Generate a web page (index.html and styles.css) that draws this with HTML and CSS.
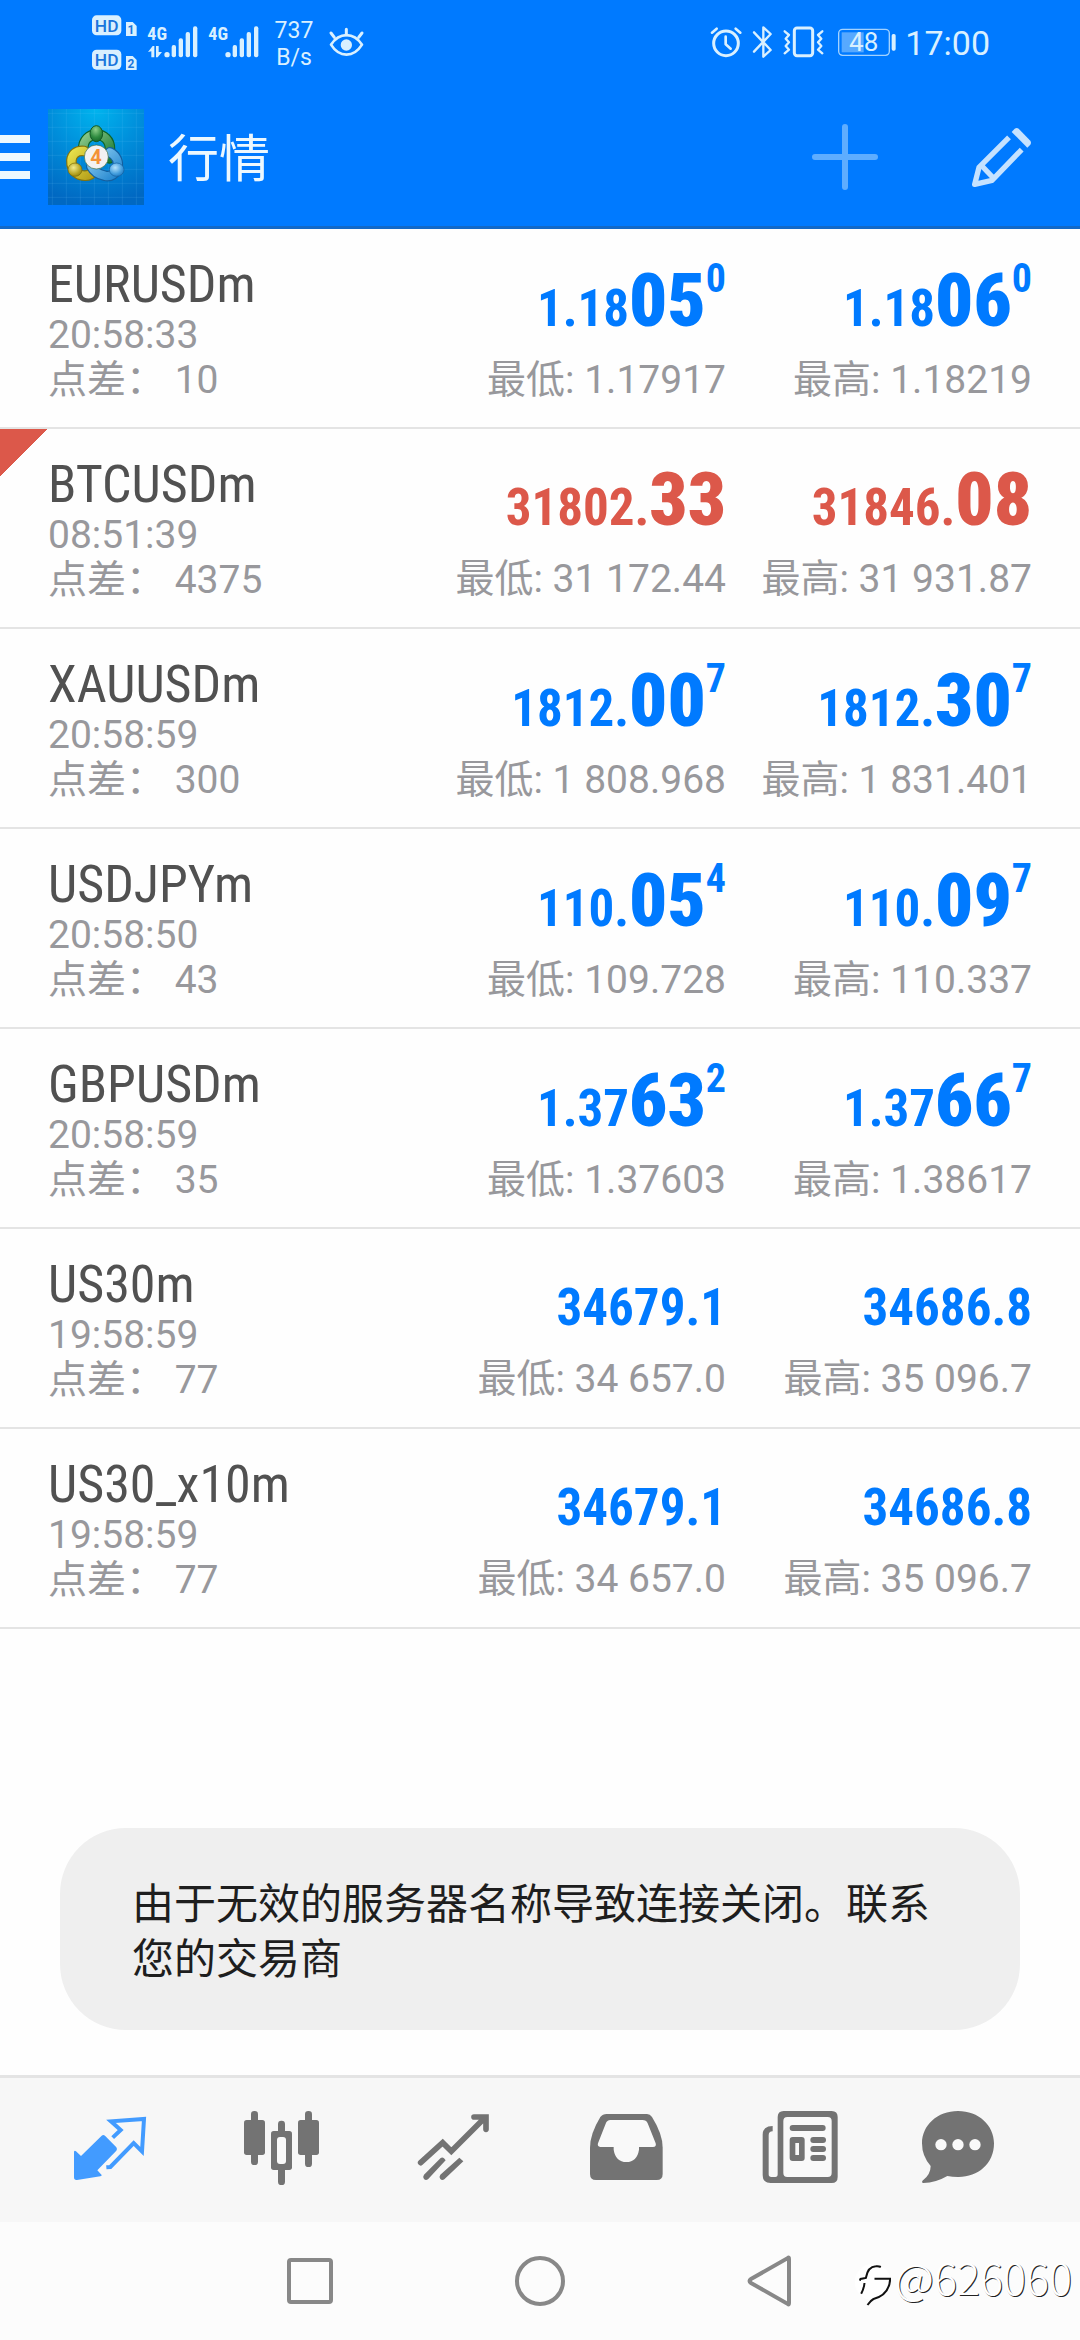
FILE: index.html
```html
<!DOCTYPE html>
<html lang="zh-CN">
<head>
<meta charset="utf-8">
<meta name="viewport" content="width=device-width, initial-scale=1">
<title>行情</title>
<link rel="stylesheet" href="styles.css">
</head>
<body>
<div class="status-bar">
  <svg class="status-signal" viewBox="60 0 540 252" aria-hidden="true">
    <g class="tint">
      <rect x="66" y="46" width="88" height="60" rx="14"/>
      <path d="M168 66h20l12 12v30h-32z"/>
      <rect x="66" y="149" width="88" height="60" rx="14"/>
      <path d="M168 168h20l12 12v30h-32z"/>
      <circle cx="291" cy="164" r="8"/>
      <rect x="305" y="135" width="13" height="37" rx="6"/>
      <rect x="326" y="115" width="13" height="57" rx="6"/>
      <rect x="347" y="96" width="13" height="76" rx="6"/>
      <rect x="369" y="79" width="13" height="93" rx="6"/>
      <path d="M234 156l14-18h5v34h-9v-18zM258 138h8v18h10l-13 16h-5z"/>
      <circle cx="474" cy="164" r="8"/>
      <rect x="488" y="135" width="13" height="37" rx="6"/>
      <rect x="509" y="115" width="13" height="57" rx="6"/>
      <rect x="530" y="96" width="13" height="76" rx="6"/>
      <rect x="552" y="79" width="13" height="93" rx="6"/>
      <text class="net" x="232" y="120">4G</text>
      <text class="net" x="415" y="120">4G</text>
    </g>
    <g class="knockout">
      <text class="hd" x="110" y="95">HD</text>
      <text class="hd" x="110" y="198">HD</text>
      <text class="sim" x="183" y="103">1</text>
      <text class="sim" x="183" y="204">2</text>
    </g>
  </svg>
  <div class="speed"><span>737</span><span>B/s</span></div>
  <svg class="status-eye" viewBox="762 0 132 252" aria-hidden="true">
    <g class="line">
      <path d="M783 134c25-38 68-38 93 0c-25 40-68 40-93 0z" stroke-width="8"/>
      <path d="M829 104V88M793 112l-10-13M866 112l10-13" stroke-width="9"/>
    </g>
    <circle class="tint" cx="829" cy="135" r="17"/>
  </svg>
  <svg class="status-right" viewBox="48 0 582 252" aria-hidden="true">
    <g class="line">
      <circle cx="105" cy="130" r="37" stroke-width="9"/>
      <path d="M104 110v23l15 13M63 98l14-12M148 98l-14-12" stroke-width="8"/>
      <path d="M189 97l50 53-22 20V82l22 20-50 53" stroke-width="7"/>
      <rect x="310" y="84" width="55" height="83" rx="8" stroke-width="9"/>
      <path d="M281 94l13 11-10 11 10 11-10 11 10 11-13 11M394 94l-13 11 10 11-10 11 10 11-10 11 13 11" stroke-width="7"/>
      <rect x="443" y="88" width="152" height="78" rx="12" stroke-width="4" opacity=".75"/>
    </g>
    <g class="tint">
      <rect x="452" y="97" width="66" height="60" opacity=".4"/>
      <rect x="602" y="102" width="12" height="50" rx="5"/>
      <text class="battery" x="518" y="153">48</text>
    </g>
  </svg>
  <time class="clock">17:00</time>
</div>

<header class="app-bar">
  <button class="menu" type="button" aria-label="菜单"><span></span><span></span><span></span></button>
  <svg class="logo" viewBox="0 0 288 288" aria-hidden="true">
    <defs>
      <radialGradient id="sky" cx=".5" cy="0" r="1">
        <stop offset="0" stop-color="#00b4ee"/><stop offset=".45" stop-color="#0090dc"/><stop offset="1" stop-color="#0068c2"/>
      </radialGradient>
      <linearGradient id="green" x1="0" y1="0" x2="1" y2="1"><stop offset="0" stop-color="#8cc98a"/><stop offset="1" stop-color="#1d7c35"/></linearGradient>
      <linearGradient id="yellow" x1="0" y1="0" x2="1" y2="1"><stop offset="0" stop-color="#e8e04a"/><stop offset="1" stop-color="#b49d18"/></linearGradient>
      <linearGradient id="blue" x1="0" y1="0" x2="1" y2="1"><stop offset="0" stop-color="#8accf2"/><stop offset="1" stop-color="#2386cf"/></linearGradient>
      <radialGradient id="greenball" cx=".45" cy=".25" r=".8"><stop offset="0" stop-color="#8fd08a"/><stop offset=".6" stop-color="#2f8b40"/><stop offset="1" stop-color="#156428"/></radialGradient>
      <radialGradient id="yellowball" cx=".4" cy=".35" r=".8"><stop offset="0" stop-color="#f2eb8a"/><stop offset=".6" stop-color="#b5a424"/><stop offset="1" stop-color="#857508"/></radialGradient>
      <radialGradient id="blueball" cx=".4" cy=".35" r=".8"><stop offset="0" stop-color="#b5e2fb"/><stop offset=".6" stop-color="#3f9bdc"/><stop offset="1" stop-color="#1a6bb5"/></radialGradient>
    </defs>
    <rect width="288" height="288" fill="url(#sky)"/>
    <path d="M13 0v288M55 0v288M97 0v288M139 0v288M181 0v288M223 0v288M265 0v288M0 13h288M0 55h288M0 97h288M0 139h288M0 181h288M0 223h288M0 265h288" stroke="#7fd4ff" stroke-opacity=".2" stroke-width="2"/>
    <g fill="none" stroke-linecap="round">
      <path d="M106 122c-4-60 82-60 80 0l-2 26" stroke="#0e6428" stroke-width="32"/>
      <path d="M106 122c-4-60 82-60 80 0l-2 26" stroke="url(#green)" stroke-width="25"/>
      <path d="M108 126c-48-5-48 56-14 71c20 7 36 2 48-14" stroke="#84730c" stroke-width="32"/>
      <path d="M108 126c-48-5-48 56-14 71c20 7 36 2 48-14" stroke="url(#yellow)" stroke-width="25"/>
      <path d="M186 130c42 22 22 80-16 70c-20-4-34-16-40-28" stroke="#145f9f" stroke-width="32"/>
      <path d="M186 130c42 22 22 80-16 70c-20-4-34-16-40-28" stroke="url(#blue)" stroke-width="25"/>
    </g>
    <ellipse cx="145" cy="74" rx="19" ry="24" fill="url(#greenball)" stroke="#125a24" stroke-width="3"/>
    <ellipse cx="81" cy="182" rx="21" ry="20" fill="url(#yellowball)" stroke="#786a08" stroke-width="2"/>
    <ellipse cx="206" cy="182" rx="22" ry="20" fill="url(#blueball)" stroke="#145f9f" stroke-width="2"/>
    <circle cx="145" cy="144" r="36" fill="#f3f2f2" stroke="#36683c" stroke-width="2"/>
    <text class="logo-digit" x="144" y="165">4</text>
  </svg>
  <h1 class="title">行情</h1>
  <div class="actions">
    <button class="icon-button" type="button" aria-label="添加">
      <svg width="68" height="68" viewBox="96 69 204 204"><path d="M198 81v180M108 171h180" stroke="#5eadff" stroke-width="18" stroke-linecap="round"/></svg>
    </button>
    <button class="icon-button" type="button" aria-label="编辑">
      <svg width="61" height="61" viewBox="576 78 183 183">
        <g fill="none" stroke="#c5e2ff" stroke-linejoin="round">
          <path d="M690 109L600 199l-13 51 52-12 89-92" stroke-width="16"/>
          <path d="M606 192l40 42" stroke-width="16"/>
        </g>
        <path d="M698 93l9-10q6-4 12 0l35 36q4 6 0 12l-9 9z" fill="#c5e2ff"/>
      </svg>
    </button>
  </div>
</header>

<main class="content">
  <table class="quotes">
    <tbody>
      <tr>
        <td class="symbol"><span class="name">EURUSDm</span><span class="meta">20:58:33</span><span class="meta">点差： 10</span></td>
        <td class="quote"><span class="price">1.18<b>05</b><sup>0</sup></span><span class="meta">最低: 1.17917</span></td>
        <td class="quote"><span class="price">1.18<b>06</b><sup>0</sup></span><span class="meta">最高: 1.18219</span></td>
      </tr>
      <tr class="down">
        <td class="symbol"><span class="name">BTCUSDm</span><span class="meta">08:51:39</span><span class="meta">点差： 4375</span></td>
        <td class="quote"><span class="price">31802.<b>33</b></span><span class="meta">最低: 31 172.44</span></td>
        <td class="quote"><span class="price">31846.<b>08</b></span><span class="meta">最高: 31 931.87</span></td>
      </tr>
      <tr>
        <td class="symbol"><span class="name">XAUUSDm</span><span class="meta">20:58:59</span><span class="meta">点差： 300</span></td>
        <td class="quote"><span class="price">1812.<b>00</b><sup>7</sup></span><span class="meta">最低: 1 808.968</span></td>
        <td class="quote"><span class="price">1812.<b>30</b><sup>7</sup></span><span class="meta">最高: 1 831.401</span></td>
      </tr>
      <tr>
        <td class="symbol"><span class="name">USDJPYm</span><span class="meta">20:58:50</span><span class="meta">点差： 43</span></td>
        <td class="quote"><span class="price">110.<b>05</b><sup>4</sup></span><span class="meta">最低: 109.728</span></td>
        <td class="quote"><span class="price">110.<b>09</b><sup>7</sup></span><span class="meta">最高: 110.337</span></td>
      </tr>
      <tr>
        <td class="symbol"><span class="name">GBPUSDm</span><span class="meta">20:58:59</span><span class="meta">点差： 35</span></td>
        <td class="quote"><span class="price">1.37<b>63</b><sup>2</sup></span><span class="meta">最低: 1.37603</span></td>
        <td class="quote"><span class="price">1.37<b>66</b><sup>7</sup></span><span class="meta">最高: 1.38617</span></td>
      </tr>
      <tr>
        <td class="symbol"><span class="name">US30m</span><span class="meta">19:58:59</span><span class="meta">点差： 77</span></td>
        <td class="quote"><span class="price">34679.1</span><span class="meta">最低: 34 657.0</span></td>
        <td class="quote"><span class="price">34686.8</span><span class="meta">最高: 35 096.7</span></td>
      </tr>
      <tr>
        <td class="symbol"><span class="name">US30_x10m</span><span class="meta">19:58:59</span><span class="meta">点差： 77</span></td>
        <td class="quote"><span class="price">34679.1</span><span class="meta">最低: 34 657.0</span></td>
        <td class="quote"><span class="price">34686.8</span><span class="meta">最高: 35 096.7</span></td>
      </tr>
    </tbody>
  </table>
  <p class="toast" role="status">由于无效的服务器名称导致连接关闭。联系您的交易商</p>
</main>

<nav class="tabs">
  <button class="tab active" type="button" aria-label="行情">
    <svg viewBox="66 96 288 288">
      <path class="solid" d="M185 197q5-4 10 0l34 35q4 5 0 10l-57 59 13 14q1 3-4 4l-70 11q-9 1-9-8v-77q2-5 6-1l15 14z"/>
      <path class="stroke" d="M218 203l24-23-29-26 99-7-6 97-25-25-70 72-12 1" stroke-width="12"/>
    </svg>
  </button>
  <button class="tab" type="button" aria-label="图表">
    <svg viewBox="582 96 288 288">
      <g class="solid">
        <rect x="633" y="123" width="21" height="162" rx="10"/><rect x="612" y="150" width="63" height="105" rx="8"/>
        <rect x="795" y="123" width="21" height="168" rx="10"/><rect x="774" y="150" width="63" height="105" rx="8"/>
        <rect x="714" y="152" width="21" height="40" rx="10"/><rect x="714" y="290" width="21" height="55" rx="10"/>
        <rect x="693" y="183" width="63" height="117" rx="8"/>
      </g>
      <rect class="paper" x="711" y="201" width="27" height="81" rx="9"/>
    </svg>
  </button>
  <button class="tab" type="button" aria-label="交易">
    <svg viewBox="1098 96 288 288">
      <path class="stroke" d="M1142 278l66-60 26 26 102-102M1302 141h36v37" stroke-width="17" stroke-linecap="round"/>
      <path class="solid" d="M1202 264q5-4 10 1l5 6-53 57q-7 4-12-1-5-6 0-13zM1258 263l12 11-57 54q-7 4-12-1-5-6 0-13z"/>
    </svg>
  </button>
  <button class="tab" type="button" aria-label="历史">
    <svg viewBox="54 96 288 288">
      <path class="solid" d="M140 132h121q9 0 15 9 32 51 32 92v79q0 18-18 18H108q-18 0-18-18v-79q0-41 31-92 7-9 19-9z"/>
      <path class="paper" d="M151 150h96q12 0 16 10l24 60q3 11-8 11h-42v8q-6 37-38 37t-38-37v-8h-40q-10-1-7-11l23-59q4-11 14-11z"/>
    </svg>
  </button>
  <button class="tab" type="button" aria-label="新闻">
    <svg viewBox="570 96 288 288">
      <path class="solid" d="M638 168v16q-12 0-12 12v117q0 8 8 8h12q7 0 7-8V141q0-18 18-18h144q18 0 18 18v180q0 18-18 18H632q-24 0-24-24V194q0-26 30-26z"/>
      <rect class="paper" x="670" y="141" width="145" height="180" rx="12"/>
      <g class="solid">
        <rect x="689" y="165" width="108" height="18" rx="9"/><rect x="689" y="201" width="45" height="72" rx="9"/>
        <rect x="751" y="201" width="47" height="18" rx="9"/><rect x="751" y="228" width="47" height="18" rx="9"/><rect x="751" y="255" width="47" height="18" rx="9"/>
      </g>
      <rect class="paper" x="706" y="219" width="11" height="36"/>
    </svg>
  </button>
  <button class="tab" type="button" aria-label="消息">
    <svg viewBox="1086 96 288 288">
      <path class="solid" d="M1194 123c62 0 108 43 108 97 0 63-50 102-108 101q-17 0-32-3-34 20-72 21-7-2-1-8 23-18 23-43-26-29-26-68c0-54 46-97 108-97z"/>
      <g class="paper"><circle cx="1143" cy="224" r="17"/><circle cx="1194" cy="224" r="17"/><circle cx="1245" cy="224" r="17"/></g>
    </svg>
  </button>
</nav>

<footer class="system-nav">
  <button class="system-key" type="button" aria-label="最近任务"><svg viewBox="0 0 54 54"><rect x="6" y="6" width="42" height="42" rx="2"/></svg></button>
  <button class="system-key" type="button" aria-label="主屏幕"><svg viewBox="0 0 54 54"><circle cx="27" cy="27" r="23"/></svg></button>
  <button class="system-key" type="button" aria-label="返回"><svg viewBox="0 0 54 54"><path d="M45 4q1-1 1 1v44q0 2-1 1L8 29q-3-2 0-4z"/></svg></button>
  <div class="watermark">
    <svg viewBox="104 128 110 132" aria-hidden="true">
      <circle cx="160" cy="185" r="54" fill="#fff"/>
      <path d="M121 181l2-5 16-3q6-34 30-35 9-1 15 2M165 175h47q-2 48-50 61-8 4-18 18M135 188q-2 18-10 32" fill="none" stroke="#111" stroke-width="6"/>
    </svg>
    <span>@626060</span>
  </div>
</footer>
</body>
</html>
```
FILE: styles.css
```css
* {
  box-sizing: border-box;
}

body {
  margin: 0;
  min-height: 100vh;
  display: flex;
  flex-direction: column;
  background: #fefefe;
  color: #98989c;
  font-family: Roboto, "Noto Sans CJK SC", sans-serif;
  font-size: 39px;
}

button {
  display: flex;
  align-items: center;
  justify-content: center;
  padding: 0;
  border: 0;
  background: none;
}

svg {
  display: block;
  flex: none;
}

/* Status bar */
.status-bar {
  display: flex;
  align-items: center;
  height: 84px;
  padding: 0 90px;
  background: #007aff;
  color: #d9f0ff;
}

.status-signal {
  width: 180px;
  height: 84px;
}

.status-eye {
  width: 44px;
  height: 84px;
  margin-left: 6px;
}

.status-right {
  width: 194px;
  height: 84px;
  margin-left: auto;
  margin-right: 4px;
}

.tint {
  fill: #d9f0ff;
}

.knockout {
  fill: #1b76dc;
  text-anchor: middle;
}

.line {
  fill: none;
  stroke: #d9f0ff;
  stroke-linecap: round;
  stroke-linejoin: round;
}

.net {
  font: 700 54px "Roboto Condensed", sans-serif;
}

.hd {
  font: 500 52px Roboto, sans-serif;
}

.sim {
  font: 700 36px Roboto, sans-serif;
}

.battery {
  font: 400 78px Roboto, sans-serif;
  text-anchor: middle;
}

.speed {
  display: flex;
  flex-direction: column;
  width: 48px;
  padding-top: 3px;
  font-size: 23px;
  line-height: 27px;
  text-align: center;
}

.clock {
  padding-top: 2px;
  font-size: 34px;
  line-height: 40px;
}

/* App bar */
.app-bar {
  display: flex;
  align-items: center;
  height: 145px;
  padding: 4px 48px 0 0;
  border-bottom: 3px solid #1269c8;
  background: #007aff;
}

.menu {
  flex-direction: column;
  gap: 10px;
  width: 30px;
  margin-right: 18px;
}

.menu span {
  width: 30px;
  height: 8px;
  background: #ecf8ff;
}

.logo {
  width: 96px;
  height: 96px;
}

.logo-digit {
  fill: #f39237;
  font: 700 60px Roboto, sans-serif;
  text-anchor: middle;
}

.title {
  margin: 0 0 0 24px;
  padding-top: 6px;
  color: #ecf8ff;
  font-size: 51px;
  font-weight: 400;
  line-height: 60px;
}

.actions {
  display: flex;
  align-items: center;
  gap: 92px;
  margin-left: auto;
}

/* Quotes */
.content {
  position: relative;
  flex: 1;
}

.quotes {
  width: 100%;
  border-spacing: 0;
}

.quotes td {
  padding: 0;
  border-bottom: 2px solid #e4e4e4;
  vertical-align: top;
}

.quotes span {
  display: block;
  white-space: nowrap;
}

.quotes .symbol {
  padding: 28px 0 24px 48px;
}

.quotes .quote {
  width: 306px;
  padding-top: 30px;
  text-align: right;
}

.quotes .quote:last-child {
  width: 354px;
  padding-right: 48px;
}

.name {
  color: #515151;
  font: 52px/56px "Roboto Condensed", Roboto, sans-serif;
}

.meta {
  line-height: 45px;
}

.price {
  color: #007aff;
  font: 700 51px/98px "Roboto Condensed", Roboto, sans-serif;
}

.price b {
  font-size: 75px;
  line-height: 75px;
}

.price sup {
  font-size: 40px;
  line-height: 40px;
  vertical-align: 34px;
}

.down .price {
  color: #dc584a;
}

.down .symbol {
  background: linear-gradient(135deg, #dc584a 50%, transparent 50%) 0 0 / 48px 48px no-repeat;
}

.toast {
  position: absolute;
  right: 60px;
  bottom: 45px;
  left: 60px;
  margin: 0;
  padding: 49px 72px 43px;
  border-radius: 66px;
  background: #efefef;
  color: #1e1e1e;
  font-size: 42px;
  line-height: 55px;
}

/* Bottom tabs */
.tabs {
  display: flex;
  height: 147px;
  padding: 0 24px;
  border-top: 3px solid #e4e4e4;
  background: #f7f7f7;
  color: #737373;
}

.tab {
  flex: 1;
  color: inherit;
}

.tab svg {
  width: 96px;
  height: 96px;
}

.tab.active {
  color: #429bff;
}

.solid {
  fill: currentColor;
}

.stroke {
  fill: none;
  stroke: currentColor;
}

.paper {
  fill: #f9f9f9;
}

/* System navigation */
.system-nav {
  position: relative;
  display: flex;
  height: 118px;
  padding: 0 18%;
  background: #fcfcfc;
}

.system-key {
  flex: 1;
}

.system-key svg {
  width: 54px;
  height: 54px;
  fill: none;
  stroke: #888;
  stroke-width: 4;
}

.watermark {
  position: absolute;
  right: 8px;
  bottom: 33px;
  display: flex;
  align-items: flex-end;
  gap: 4px;
  color: #fff;
  font: 300 43px/50px "Noto Sans CJK SC", sans-serif;
  text-shadow: 1px 1px 0 #222;
}

.watermark span {
  padding-bottom: 6px;
}

.watermark svg {
  width: 37px;
  height: 44px;
}
```
